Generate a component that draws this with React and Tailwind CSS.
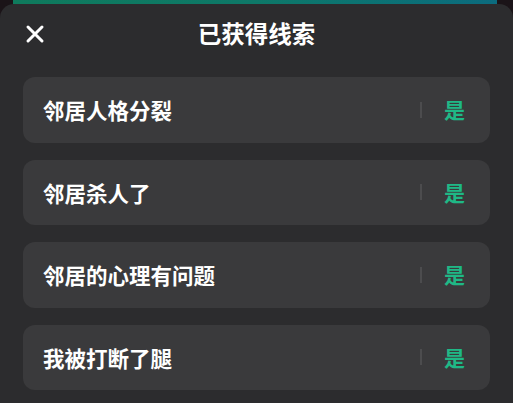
import React from "react";

const items = ["邻居人格分裂", "邻居杀人了", "邻居的心理有问题", "我被打断了腿"];

export default function App() {
  return (
    <div
      className="w-[513px] h-[403px] overflow-hidden bg-[#1b1418] flex flex-col"
      style={{ fontFamily: '"Noto Sans CJK SC", "Noto Sans", sans-serif' }}
    >
      <div className="h-[4px] shrink-0 flex">
        <div className="w-[13px] bg-[#1b1418]" />
        <div className="flex-1 bg-gradient-to-r from-[#0f7a5c] via-[#0e7868] to-[#0c6b7e]" />
        <div className="w-[16px] bg-[#1b1418]" />
      </div>
      <div className="flex-1 bg-[#2c2c2e] rounded-t-[14px] flex flex-col">
        <div className="h-[60px] shrink-0 relative flex items-center justify-center">
          <svg
            className="absolute left-[25px] top-[20px]"
            width="20"
            height="20"
            viewBox="0 0 20 20"
            fill="none"
            stroke="white"
            strokeWidth="3"
            strokeLinecap="round"
          >
            <path d="M3 3 L17 17 M17 3 L3 17" />
          </svg>
          <span className="text-white font-bold text-[23.5px] leading-none">已获得线索</span>
        </div>
        <div className="flex flex-col gap-[17px] px-[23px] pt-[13px]">
          {items.map((t) => (
            <div
              key={t}
              className="h-[65.5px] rounded-[12px] bg-[#3a3a3c] flex items-center pl-[20px] pr-[25px]"
            >
              <span className="flex-1 text-white font-bold text-[21.5px] leading-none">{t}</span>
              <div className="w-[2px] h-[16px] bg-[#4c4c4e] mr-[22px]" />
              <span className="text-[#1fb886] font-bold text-[21px] leading-none">是</span>
            </div>
          ))}
        </div>
      </div>
    </div>
  );
}
